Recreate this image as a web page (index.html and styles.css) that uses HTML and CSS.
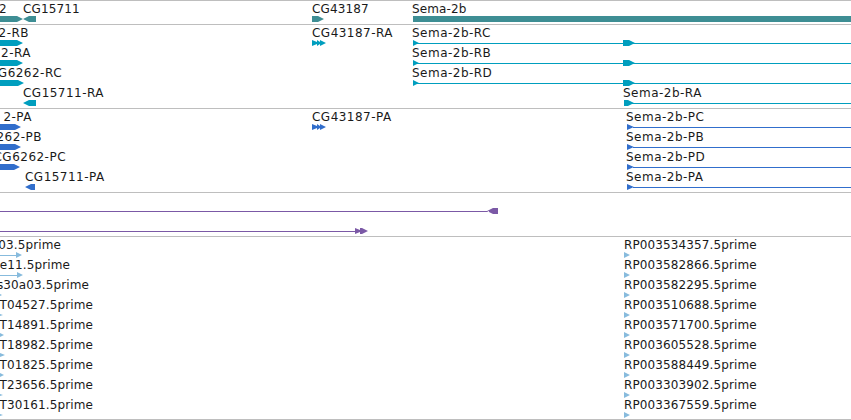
FILE: index.html
```
<!DOCTYPE html>
<html lang="en">
<head>
<meta charset="utf-8">
<title>Genome browser</title>
<link rel="stylesheet" href="styles.css">
</head>
<body>
<main class="browser">
  <section class="track genes">
    <div class="row"><div class="labels"><p><span class="cut">2</span><span>CG15711</span></p><p>CG43187</p><p>Sema-2b</p><p></p></div>
      <svg viewBox="0 0 851 6"><path d="M0 0H17L23 3L29 0H36V6H29L23 3L17 6H0ZM312 0H318L324 3L318 6H312ZM413 0H851V6H413Z"/></svg></div>
  </section>
  <section class="track transcripts">
    <div class="row"><div class="labels"><p class="end-29">2-RB</p><p>CG43187-RA</p><p>Sema-2b-RC</p><p></p></div>
      <svg viewBox="0 0 851 6"><path d="M0 0H17L23 3L17 6H0ZM312 0L317 2V0L320 2V0L326 3L320 6V4L317 6V4L312 6ZM413 0L419 3L413 6ZM418 3H851V4H418ZM623 0H629L635 3L629 6H623Z"/></svg></div>
    <div class="row"><div class="labels"><p class="end-31">2-RA</p><p></p><p>Sema-2b-RB</p><p></p></div>
      <svg viewBox="0 0 851 6"><path d="M0 0H17L23 3L17 6H0ZM413 0L419 3L413 6ZM418 3H851V4H418ZM623 0H629L635 3L629 6H623Z"/></svg></div>
    <div class="row"><div class="labels"><p class="end-62">G6262-RC</p><p></p><p>Sema-2b-RD</p><p></p></div>
      <svg viewBox="0 0 851 6"><path d="M0 0H18L24 3L18 6H0ZM413 0L419 3L413 6ZM418 3H851V4H418ZM623 0H629L635 3L629 6H623Z"/></svg></div>
    <div class="row"><div class="labels"><p class="from-23">CG15711-RA</p><p></p><p></p><p>Sema-2b-RA</p></div>
      <svg viewBox="0 0 851 6"><path d="M36 0H29L23 3L29 6H36ZM624 0H628L634 3L628 6H624ZM633 3H851V4H633Z"/></svg></div>
  </section>
  <section class="track proteins">
    <div class="row"><div class="labels"><p class="end-32">2-PA</p><p>CG43187-PA</p><p></p><p>Sema-2b-PC</p></div>
      <svg viewBox="0 0 851 6"><path d="M0 0H15L21 3L15 6H0ZM312 0L317 2V0L320 2V0L326 3L320 6V4L317 6V4L312 6ZM627 0L634 3L627 6ZM633 3H851V4H633Z"/></svg></div>
    <div class="row"><div class="labels"><p class="end-42">262-PB</p><p></p><p></p><p>Sema-2b-PB</p></div>
      <svg viewBox="0 0 851 6"><path d="M0 0H15L21 3L15 6H0ZM627 0L634 3L627 6ZM633 3H851V4H633Z"/></svg></div>
    <div class="row"><div class="labels"><p class="end-66">CG6262-PC</p><p></p><p></p><p>Sema-2b-PD</p></div>
      <svg viewBox="0 0 851 6"><path d="M0 0H14L20 3L14 6H0ZM627 0L634 3L627 6ZM633 3H851V4H633Z"/></svg></div>
    <div class="row"><div class="labels"><p class="from-25">CG15711-PA</p><p></p><p></p><p>Sema-2b-PA</p></div>
      <svg viewBox="0 0 851 6"><path d="M35 0H31L25 3L31 6H35ZM627 0L634 3L627 6ZM633 3H851V4H633Z"/></svg></div>
  </section>
  <section class="track cdna">
    <div class="row"><div class="labels"></div>
      <svg viewBox="0 0 851 6"><path d="M0 3H489V4H0ZM498 0H493L487 3L493 6H498Z"/></svg></div>
    <div class="row"><div class="labels"></div>
      <svg viewBox="0 0 851 6"><path d="M0 3H355V4H0ZM355 0L360 2V0H362L368 3L362 6H360V4L355 6Z"/></svg></div>
  </section>
  <section class="track ests">
    <div class="row"><div class="labels"><p class="end-61">03.5prime</p><p></p><p></p><p>RP003534357.5prime</p></div>
      <svg viewBox="0 0 851 6"><path d="M0 3H16V4H0ZM16 0L22 3L16 6ZM624 0L630 3L624 6Z"/></svg></div>
    <div class="row"><div class="labels"><p class="end-70">e11.5prime</p><p></p><p></p><p>RP003582866.5prime</p></div>
      <svg viewBox="0 0 851 6"><path d="M0 3H17V4H0ZM17 0L23 3L17 6ZM624 0L630 3L624 6Z"/></svg></div>
    <div class="row"><div class="labels"><p class="end-89">s30a03.5prime</p><p></p><p></p><p>RP003582295.5prime</p></div>
      <svg viewBox="0 0 851 6"><path d="M0 2L2 3L0 4ZM624 0L630 3L624 6Z"/></svg></div>
    <div class="row"><div class="labels"><p class="end-93">T04527.5prime</p><p></p><p></p><p>RP003510688.5prime</p></div>
      <svg viewBox="0 0 851 6"><path d="M0 2L3 3L0 4ZM624 0L630 3L624 6Z"/></svg></div>
    <div class="row"><div class="labels"><p class="end-93">T14891.5prime</p><p></p><p></p><p>RP003571700.5prime</p></div>
      <svg viewBox="0 0 851 6"><path d="M0 1L4 3L0 5ZM624 0L630 3L624 6Z"/></svg></div>
    <div class="row"><div class="labels"><p class="end-93">T18982.5prime</p><p></p><p></p><p>RP003605528.5prime</p></div>
      <svg viewBox="0 0 851 6"><path d="M0 1L5 3L0 5ZM624 0L630 3L624 6Z"/></svg></div>
    <div class="row"><div class="labels"><p class="end-93">T01825.5prime</p><p></p><p></p><p>RP003588449.5prime</p></div>
      <svg viewBox="0 0 851 6"><path d="M0 1L4 3L0 5ZM624 0L630 3L624 6Z"/></svg></div>
    <div class="row"><div class="labels"><p class="end-93">T23656.5prime</p><p></p><p></p><p>RP003303902.5prime</p></div>
      <svg viewBox="0 0 851 6"><path d="M0 2L3 3L0 4ZM624 0L630 3L624 6Z"/></svg></div>
    <div class="row"><div class="labels"><p class="end-93">T30161.5prime</p><p></p><p></p><p>RP003367559.5prime</p></div>
      <svg viewBox="0 0 851 6"><path d="M0 2L3 3L0 4ZM624 0L630 3L624 6Z"/></svg></div>
  </section>
</main>
</body>
</html>
```
FILE: styles.css
```
* { box-sizing: border-box; }
body {
  margin: 0;
  background: #fff;
  color: #1a1a1a;
  font: 12px/14px "DejaVu Sans", sans-serif;
  letter-spacing: 0.12px;
}
.browser {
  width: 851px;
  height: 420px;
  overflow: hidden;
}
.track {
  border-top: 1px solid #bebebe;
  padding-bottom: 3px;
}
.row { height: 20px; }
.labels {
  display: grid;
  grid-template-columns: 312px 100px 211px 228px;
  height: 15px;
  padding-top: 1px;
}
.labels p {
  display: flex;
  margin: 0;
  white-space: nowrap;
}
.row svg {
  display: block;
  width: 851px;
  height: 6px;
}
.cut { width: 23px; margin-left: -1px; margin-right: 1px; }
.labels [class^="end-"] { justify-content: flex-end; }
.labels .end-29 { width: 29px; }
.labels .end-31 { width: 31px; }
.labels .end-32 { width: 32px; }
.labels .end-42 { width: 42px; }
.labels .end-61 { width: 61px; }
.labels .end-62 { width: 62px; }
.labels .end-66 { width: 66px; }
.labels .end-70 { width: 70px; }
.labels .end-89 { width: 89px; }
.labels .end-93 { width: 93px; }
.labels .from-23 { padding-left: 23px; }
.labels .from-25 { padding-left: 25px; }
.genes { fill: #3e8e94; }
.transcripts, .proteins { letter-spacing: 0.48px; }
.transcripts { fill: #009ebe; }
.proteins { fill: #316ecc; }
.proteins p:last-child { padding-left: 3px; }
.cdna { fill: #7b59a6; }
.ests { fill: #87bbdd; border-bottom: 1px solid #bebebe; padding-bottom: 2px; }
.ests p:last-child { padding-left: 1px; }
```
